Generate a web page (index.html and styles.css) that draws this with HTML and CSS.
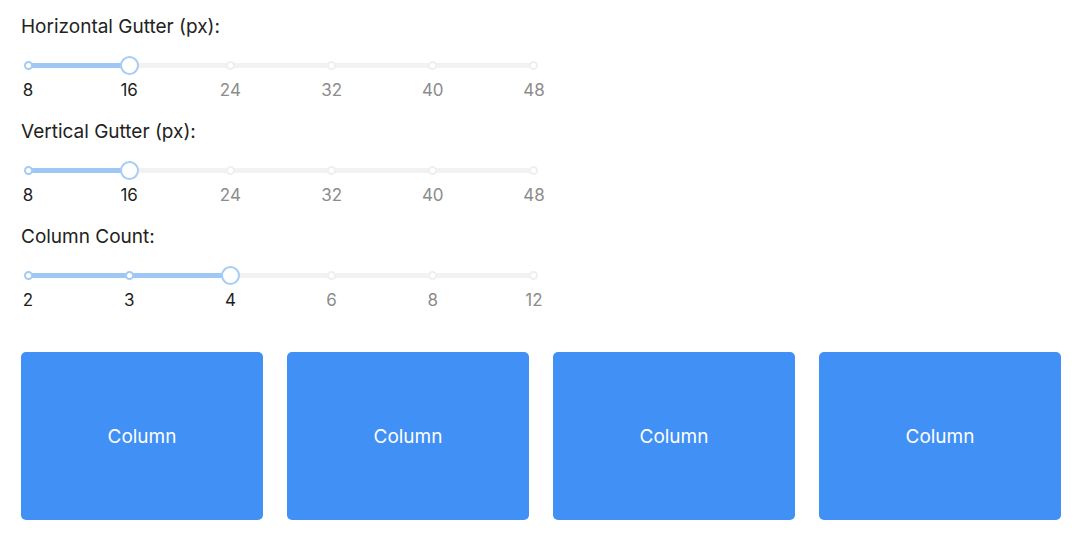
FILE: index.html
```html
<!DOCTYPE html>
<html>
<head>
<meta charset="utf-8">
<link rel="stylesheet" href="styles.css">
</head>
<body>
<div class="page">
  <div class="field">
    <div class="label">Horizontal Gutter (px):</div>
    <div class="slider">
      <div class="rail">
        <div class="track" style="width: 20%"></div>
      </div>
      <div class="points">
        <span class="pt"><i class="dot on"></i></span>
        <span class="pt"><i class="handle"></i></span>
        <span class="pt"><i class="dot"></i></span>
        <span class="pt"><i class="dot"></i></span>
        <span class="pt"><i class="dot"></i></span>
        <span class="pt"><i class="dot"></i></span>
      </div>
    </div>
    <div class="marks">
      <span class="mk on"><b>8</b></span>
      <span class="mk on"><b>16</b></span>
      <span class="mk"><b>24</b></span>
      <span class="mk"><b>32</b></span>
      <span class="mk"><b>40</b></span>
      <span class="mk"><b>48</b></span>
    </div>
  </div>

  <div class="field">
    <div class="label">Vertical Gutter (px):</div>
    <div class="slider">
      <div class="rail">
        <div class="track" style="width: 20%"></div>
      </div>
      <div class="points">
        <span class="pt"><i class="dot on"></i></span>
        <span class="pt"><i class="handle"></i></span>
        <span class="pt"><i class="dot"></i></span>
        <span class="pt"><i class="dot"></i></span>
        <span class="pt"><i class="dot"></i></span>
        <span class="pt"><i class="dot"></i></span>
      </div>
    </div>
    <div class="marks">
      <span class="mk on"><b>8</b></span>
      <span class="mk on"><b>16</b></span>
      <span class="mk"><b>24</b></span>
      <span class="mk"><b>32</b></span>
      <span class="mk"><b>40</b></span>
      <span class="mk"><b>48</b></span>
    </div>
  </div>

  <div class="field">
    <div class="label">Column Count:</div>
    <div class="slider">
      <div class="rail">
        <div class="track" style="width: 40%"></div>
      </div>
      <div class="points">
        <span class="pt"><i class="dot on"></i></span>
        <span class="pt"><i class="dot on"></i></span>
        <span class="pt"><i class="handle"></i></span>
        <span class="pt"><i class="dot"></i></span>
        <span class="pt"><i class="dot"></i></span>
        <span class="pt"><i class="dot"></i></span>
      </div>
    </div>
    <div class="marks">
      <span class="mk on"><b>2</b></span>
      <span class="mk on"><b>3</b></span>
      <span class="mk on"><b>4</b></span>
      <span class="mk"><b>6</b></span>
      <span class="mk"><b>8</b></span>
      <span class="mk"><b>12</b></span>
    </div>
  </div>

  <div class="grid">
    <div class="col">Column</div>
    <div class="col">Column</div>
    <div class="col">Column</div>
    <div class="col">Column</div>
  </div>
</div>
</body>
</html>
```

FILE: styles.css
```css
* { box-sizing: border-box; }

html, body {
  margin: 0;
  padding: 0;
  background: #ffffff;
}

body {
  font-family: Inter, "Liberation Sans", Arial, sans-serif;
  color: rgba(0, 0, 0, 0.88);
}

.page {
  width: 1061px;
  padding: 15px 0 0 21px;
}

.field {
  width: 520px;
  margin-bottom: 20px;
}

.label {
  font-size: 19px;
  line-height: 24px;
  height: 24px;
  color: #222222;
}

.slider {
  position: relative;
  margin: 16px 0 0 7px;
  width: 506px;
  height: 20px;
  display: flex;
  align-items: center;
}

.rail {
  width: 100%;
  height: 5px;
  border-radius: 3px;
  background: #f2f2f2;
}

.track {
  height: 100%;
  border-radius: 3px;
  background: #9fc7f4;
}

.points {
  position: absolute;
  inset: 0;
  display: flex;
  justify-content: space-between;
  align-items: center;
}

.pt {
  width: 0;
  height: 20px;
  display: flex;
  justify-content: center;
  align-items: center;
}

.dot {
  flex: none;
  width: 9px;
  height: 9px;
  border-radius: 50%;
  background: #ffffff;
  border: 2px solid #efefef;
}

.dot.on {
  border-color: #a4cbf5;
}

.handle {
  flex: none;
  width: 19px;
  height: 19px;
  border-radius: 50%;
  background: #ffffff;
  border: 2.5px solid #a6cdf6;
}

.marks {
  margin: 5px 0 0 7px;
  width: 506px;
  height: 20px;
  display: flex;
  justify-content: space-between;
}

.mk {
  width: 0;
  display: flex;
  justify-content: center;
}

.mk b {
  flex: none;
  font-weight: 400;
  font-size: 17px;
  line-height: 20px;
  color: #8c8c8c;
  white-space: nowrap;
}

.mk.on b {
  color: #1f1f1f;
}

.grid {
  margin-top: 42px;
  display: grid;
  grid-template-columns: repeat(4, 1fr);
  column-gap: 24px;
}

.col {
  height: 168px;
  border-radius: 5px;
  background: #4090f5;
  color: #ffffff;
  font-size: 19px;
  display: flex;
  align-items: center;
  justify-content: center;
}
```
